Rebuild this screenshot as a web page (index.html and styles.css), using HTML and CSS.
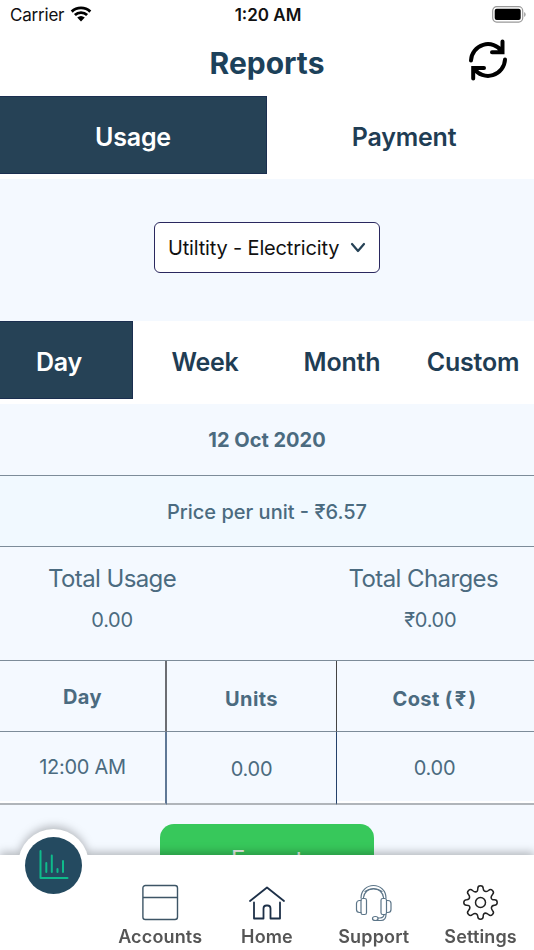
FILE: index.html
```html
<!DOCTYPE html>
<html lang="en">
<head>
    <meta charset="UTF-8">
    <meta name="viewport" content="width=device-width, initial-scale=1.0">
    <title>Reports</title>
    <link rel="stylesheet" href="styles.css">
</head>
<body>
    <div class="status-bar">
        <div class="carrier">
            <span>Carrier</span>
            <svg width="22" height="16" viewBox="0 0 22 16">
                <path d="M1.7 5.6a13.6 13.6 0 0 1 18.6 0M4.9 9a9 9 0 0 1 12.2 0" fill="none" stroke="#000" stroke-width="2.9"/>
                <path d="M7.2 11.6a5.7 5.7 0 0 1 7.6 0L11 15.6z"/>
            </svg>
        </div>
        <span class="time">1:20 AM</span>
        <svg class="battery" width="34" height="17" viewBox="0 0 34 17">
            <rect x="0.7" y="0.7" width="30" height="15.4" rx="4" fill="none" stroke="#999" stroke-width="1.2"/>
            <rect x="2.7" y="2.7" width="26" height="11.4" rx="2"/>
            <path d="M32.2 6v5q1.4-.8 1.4-2.5T32.2 6z" fill="#999"/>
        </svg>
    </div>

    <header class="header">
        <h1>Reports</h1>
        <svg class="refresh" width="40" height="44" viewBox="0 0 40 44" fill="none" stroke="#000" stroke-width="4" stroke-linecap="round">
            <path d="M3 22.5A17 17 0 0 1 34 13.5M34.5 3.5v10.8H24"/>
            <path d="M37 21.5A17 17 0 0 1 6 30.5M5.2 40.5V30H16"/>
        </svg>
    </header>

    <div class="tabs">
        <div class="tab active">Usage</div>
        <div class="tab payment">Payment</div>
    </div>

    <main class="content">
        <div class="filter">
            <div class="select">
                <span>Utiltity - Electricity</span>
                <svg width="16" height="12" viewBox="0 0 16 12">
                    <path d="M2 2l6 7 6-7" fill="none" stroke="#264256" stroke-width="2.2" stroke-linecap="round" stroke-linejoin="round"/>
                </svg>
            </div>
        </div>

        <div class="periods">
            <div class="tab active day">Day</div>
            <div class="tab week">Week</div>
            <div class="tab month">Month</div>
            <div class="tab custom">Custom</div>
        </div>

        <div class="date">12 Oct 2020</div>
        <div class="price">Price per unit - ₹6.57</div>

        <div class="totals">
            <div class="total">
                <div class="total-label">Total Usage</div>
                <div class="total-value">0.00</div>
            </div>
            <div class="total">
                <div class="total-label">Total Charges</div>
                <div class="total-value charges">₹0.00</div>
            </div>
        </div>

        <div class="table">
            <div class="cell head first">Day</div>
            <div class="cell head">Units</div>
            <div class="cell head last">Cost (<span class="rupee">₹</span>)</div>
            <div class="cell first white-edge">12:00 AM</div>
            <div class="cell">0.00</div>
            <div class="cell last white-edge">0.00</div>
        </div>

        <div class="export">Export</div>
    </main>

    <nav class="nav">
        <div class="nav-item">
            <div class="nav-current">
                <div class="nav-circle">
                    <svg width="30" height="30" viewBox="0 0 30 30" fill="none" stroke="#0fba8b" stroke-width="2" stroke-linecap="round" stroke-linejoin="round">
                        <path d="M1.5 1v27h27M7.3 13v9M12.8 5.500V22M18.500 19v3M24 11v11"/>
                    </svg>
                </div>
            </div>
        </div>
        <div class="nav-item">
            <svg width="38" height="38" viewBox="0 0 38 38" fill="none" stroke="#3d5566" stroke-width="1.4">
                <rect x="1.9" y="1.5" width="34.6" height="34" rx="2.5"/>
                <path d="M2 13.5h34.5"/>
            </svg>
            <span>Accounts</span>
        </div>
        <div class="nav-item">
            <svg width="38" height="38" viewBox="0 0 38 38" fill="none" stroke="#1d3048" stroke-width="1.8" stroke-linejoin="round" stroke-linecap="round">
                <path d="M2 17L19 3.5 36 17"/>
                <path d="M6 18.500V34.5h9.500V24.5a3 3 0 0 1 3-3h1a3 3 0 0 1 3 3v10H32V18.5"/>
            </svg>
            <span>Home</span>
        </div>
        <div class="nav-item">
            <svg width="38" height="38" viewBox="0 0 38 38" fill="none" stroke="#5c7588" stroke-width="1.2" stroke-linecap="round" stroke-linejoin="round">
                <path d="M6 14C6 6.500 12 1.5 18.500 1.500S31 6.500 31 14M8.500 13.500C9.200 8 13.500 4.500 18.500 4.500s9.300 3.500 10 9"/>
                <path d="M10 7.500c4.500-3.500 12.500-3.500 17 0"/>
                <rect x="6" y="14.500" width="5.500" height="16" rx="1.800"/>
                <rect x="26" y="14.500" width="5.500" height="16" rx="1.800"/>
                <path d="M6 16.500H4.500A3 3 0 0 0 1.500 19.500v6a3 3 0 0 0 3 3H6M31.500 16.500H33a3 3 0 0 1 3 3v6a3 3 0 0 1-3 3h-1.500"/>
                <path d="M31 30.500q0 6-5 6h-5.500M29 30.500q0 3-4 3.500h-2"/>
                <ellipse cx="20.300" cy="34.500" rx="2.800" ry="2"/>
            </svg>
            <span>Support</span>
        </div>
        <div class="nav-item">
            <svg width="38" height="38" viewBox="0 0 38 38" fill="none" stroke="#222" stroke-width="1.5" stroke-linejoin="round">
                <circle cx="18.5" cy="18.5" r="5"/>
                <path transform="translate(-.5 0)" d="M16.300 4.500a2.700 2.700 0 0 1 5.400 0Q22 7.600 24.500 7.600Q25.500 7.600 27 6.500a2.700 2.700 0 0 1 4 4Q28.500 13.500 30.500 15.300Q31.300 15.800 33 15.800a2.700 2.700 0 0 1 0 5.400Q29.900 21.500 29.900 24Q29.900 25 31 26.500a2.700 2.700 0 0 1-4 4Q24 28 22.200 30Q21.700 30.800 21.700 32.500a2.700 2.700 0 0 1-5.400 0Q16 29.400 13.500 29.400Q12.500 29.400 11 30.500a2.700 2.700 0 0 1-4-4Q9.500 23.500 7.500 21.700Q6.700 21.200 5 21.200a2.700 2.700 0 0 1 0-5.400Q8.100 15.500 8.100 13Q8.100 12 7 10.500a2.700 2.700 0 0 1 4-4Q14 9 15.800 7Q16.300 6.200 16.300 4.500z"/>
            </svg>
            <span>Settings</span>
        </div>
    </nav>
</body>
</html>
```
FILE: styles.css
```css
* {
    box-sizing: border-box;
}

body {
    margin: 0;
    height: 950px;
    overflow: hidden;
    display: flex;
    flex-direction: column;
    font-family: Inter, sans-serif;
    background-color: #fff;
    color: #4b6b80;
}

.status-bar {
    display: grid;
    grid-template-columns: 1fr auto 1fr;
    align-items: center;
    height: 30px;
    padding: 0 8px 0 10px;
    font-size: 17px;
    color: #111;
}

.carrier {
    display: flex;
    align-items: center;
    gap: 6px;
    letter-spacing: -0.2px;
}

.carrier svg {
    margin-top: -2px;
}

.time {
    font-weight: 600;
}

.battery {
    justify-self: end;
    margin-top: -2px;
}

.header {
    display: grid;
    grid-template-columns: 1fr auto 1fr;
    align-items: center;
    height: 66px;
}

h1 {
    grid-column: 2;
    margin: 0;
    font-size: 30px;
    font-weight: 700;
    color: #1c415a;
}

.refresh {
    justify-self: end;
    margin: -6px 26px 0 0;
}

.tabs,
.periods {
    display: flex;
    flex-shrink: 0;
    height: 83px;
    padding-bottom: 5px;
    background-color: #fff;
}

.tab {
    width: 50%;
    display: flex;
    align-items: center;
    justify-content: center;
    padding-top: 3px;
    font-size: 25px;
    font-weight: 600;
    letter-spacing: -0.2px;
    color: #1f3d54;
}

.payment {
    padding-left: 7px;
}

.active {
    background-color: #264256;
    border: 1px solid #1b2f50;
    border-left: none;
    color: #fff;
}

.content {
    flex: 1;
    overflow: hidden;
    background-color: #f4f9ff;
}

.filter {
    display: flex;
    justify-content: center;
    height: 142px;
    padding-top: 43px;
}

.select {
    display: flex;
    align-items: center;
    justify-content: space-between;
    width: 226px;
    height: 51px;
    padding: 0 13px;
    border: 1.5px solid #2a285f;
    border-radius: 6px;
    background-color: #fff;
    font-size: 20px;
    letter-spacing: -0.17px;
    color: #111;
}

.periods .tab {
    width: 133px;
}

.periods .day {
    padding-right: 14px;
}

.periods .week {
    width: 144px;
}

.periods .month {
    width: 130px;
}

.periods .custom {
    width: 127px;
    padding-left: 5px;
}

.date,
.price {
    display: flex;
    align-items: center;
    justify-content: center;
    height: 72px;
    padding-top: 1px;
    border-bottom: 1px solid #7d8c99;
    font-size: 20px;
    font-weight: 700;
}

.price {
    height: 71px;
    background-color: #f1f9ff;
    font-weight: 500;
}

.totals {
    display: flex;
    justify-content: space-between;
    height: 114px;
    padding: 16px 36px 0 48px;
    border-bottom: 1px solid #7d8c99;
}

.total {
    text-align: center;
}

.total-label {
    font-size: 24px;
    line-height: 31px;
    letter-spacing: -0.6px;
}

.total-value {
    margin-top: 12px;
    font-size: 20px;
    line-height: 28px;
    letter-spacing: -0.3px;
}

.charges {
    padding-left: 14px;
}

.table {
    display: grid;
    grid-template-columns: 167px 170px 1fr;
    grid-template-rows: 71px 73px;
}

.cell {
    display: flex;
    align-items: center;
    justify-content: center;
    padding-top: 2px;
    border-right: 1px solid #24416a;
    border-bottom: 2px solid #b0b5ba;
    font-size: 20px;
    letter-spacing: -0.3px;
}

.head {
    padding-top: 6px;
    border-right-color: #444;
    border-bottom: 1px solid #7d8c99;
    font-weight: 700;
    letter-spacing: 0.4px;
    white-space: pre;
}

.first {
    padding-top: 0;
    padding-bottom: 2px;
    border-right: 2px solid #5f7896;
}

.first.head {
    padding: 2px 0 0;
    border-right-color: #6c6e73;
}

.last {
    padding-right: 2px;
    border-right: none;
}

.last.white-edge {
    padding-top: 0;
}

.rupee {
    margin: 0 2px;
}

.white-edge {
    box-shadow: inset 0 -2px 0 #fff;
}

.export {
    width: 214px;
    height: 62px;
    margin: 19px auto 0;
    border-radius: 14px;
    background-color: #37c85b;
    font-size: 24px;
    line-height: 71px;
    letter-spacing: -0.3px;
    text-align: center;
    color: #e4efe6;
}

.nav {
    display: grid;
    grid-template-columns: repeat(5, 1fr);
    height: 95px;
    flex-shrink: 0;
    background-color: #fff;
    filter: drop-shadow(0 -3px 4px rgba(0, 0, 0, 0.25));
}

.nav-item {
    position: relative;
    display: flex;
    flex-direction: column;
    align-items: center;
    padding-top: 29px;
    font-size: 18px;
    font-weight: 600;
    line-height: 22px;
    letter-spacing: 0.15px;
    color: #555;
}

.nav-item span {
    margin-top: 4px;
}

/* current page button sticks out over the top of the bar */
.nav-current {
    position: absolute;
    top: -26px;
    left: 18px;
    display: flex;
    align-items: center;
    justify-content: center;
    width: 71px;
    height: 72px;
    border-radius: 50%;
    background-color: #fff;
}

.nav-circle {
    display: flex;
    align-items: center;
    justify-content: center;
    width: 57px;
    height: 57px;
    border-radius: 50%;
    background-color: #244a60;
}
```
